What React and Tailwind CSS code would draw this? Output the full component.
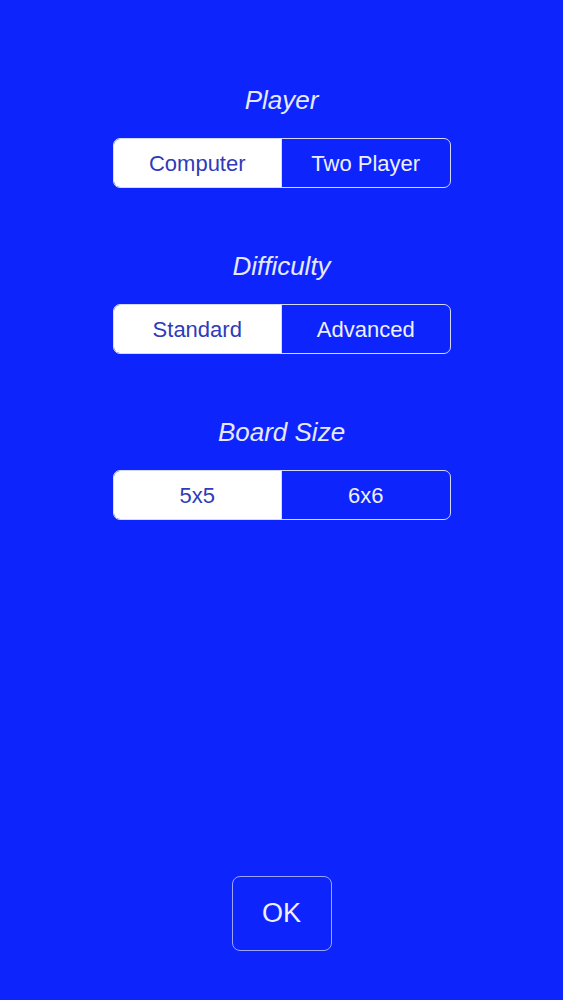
import React, { useState } from 'react'

function Segmented({ options, value, onChange }) {
  return (
    <div className="flex w-[338px] h-[50px] rounded-[7px] border-[1.5px] border-[#d4daff] overflow-hidden">
      {options.map((opt, i) => (
        <button
          key={opt}
          onClick={() => onChange(i)}
          className={`flex-1 flex items-center justify-center text-[22px] ${
            i > 0 ? 'border-l-[1.5px] border-[#d4daff]' : ''
          } ${value === i ? 'bg-white text-[#2f3bb8]' : 'bg-transparent text-[#eef0ff]'}`}
        >
          {opt}
        </button>
      ))}
    </div>
  )
}

function Section({ title, options, value, onChange }) {
  return (
    <div className="flex flex-col items-center">
      <div className="h-8 leading-8 text-[26px] italic text-[#e6e9ff]">{title}</div>
      <div className="mt-[22px]">
        <Segmented options={options} value={value} onChange={onChange} />
      </div>
    </div>
  )
}

export default function App() {
  const [player, setPlayer] = useState(0)
  const [difficulty, setDifficulty] = useState(0)
  const [size, setSize] = useState(0)

  return (
    <div
      className="min-h-screen bg-[#0d24fc] flex flex-col items-center pt-[84px] pb-[49px]"
      style={{ fontFamily: '"Liberation Sans", Arial, sans-serif' }}
    >
      <div className="flex flex-col gap-[62px]">
        <Section title="Player" options={['Computer', 'Two Player']} value={player} onChange={setPlayer} />
        <Section title="Difficulty" options={['Standard', 'Advanced']} value={difficulty} onChange={setDifficulty} />
        <Section title="Board Size" options={['5x5', '6x6']} value={size} onChange={setSize} />
      </div>

      <button className="mt-auto w-[100px] h-[75px] rounded-[8px] border border-[#9aa6ff] text-[27px] text-[#eef0ff]">
        OK
      </button>
    </div>
  )
}
